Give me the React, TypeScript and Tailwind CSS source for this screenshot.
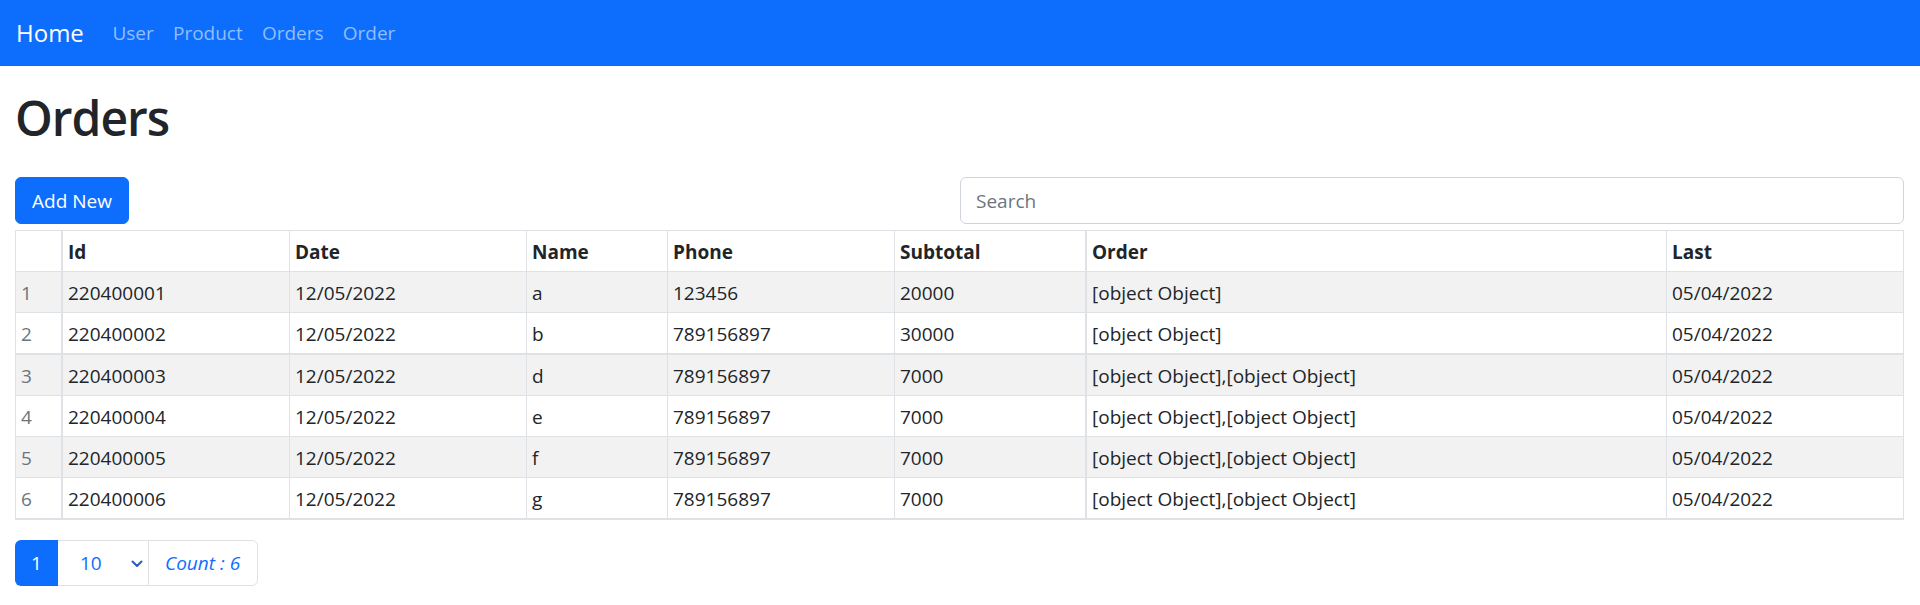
import React from "react";

const rows = [
  { n: 1, id: "220400001", date: "12/05/2022", name: "a", phone: "123456", sub: "20000", order: "[object Object]", last: "05/04/2022" },
  { n: 2, id: "220400002", date: "12/05/2022", name: "b", phone: "789156897", sub: "30000", order: "[object Object]", last: "05/04/2022" },
  { n: 3, id: "220400003", date: "12/05/2022", name: "d", phone: "789156897", sub: "7000", order: "[object Object],[object Object]", last: "05/04/2022" },
  { n: 4, id: "220400004", date: "12/05/2022", name: "e", phone: "789156897", sub: "7000", order: "[object Object],[object Object]", last: "05/04/2022" },
  { n: 5, id: "220400005", date: "12/05/2022", name: "f", phone: "789156897", sub: "7000", order: "[object Object],[object Object]", last: "05/04/2022" },
  { n: 6, id: "220400006", date: "12/05/2022", name: "g", phone: "789156897", sub: "7000", order: "[object Object],[object Object]", last: "05/04/2022" },
];

const gridCols = "grid grid-cols-[47px_227px_237px_141px_227px_192px_580px_1fr]";
const cell = "h-[40px] pl-[5px] pt-[2px] leading-[38px] whitespace-nowrap overflow-hidden";

export default function App() {
  return (
    <div className="min-h-[605px] bg-white text-[#212529]" style={{ fontFamily: '"Open Sans", "Noto Sans", sans-serif' }}>
      <nav className="flex h-[66px] items-center bg-[#0d6efd] pl-[16px]">
        <a className="mr-[19px] text-[24px] leading-[36px] text-white">Home</a>
        {["User", "Product", "Orders", "Order"].map((l) => (
          <a key={l} className="px-[9.6px] text-[19px] leading-[28.8px] text-[#92befe]">
            {l}
          </a>
        ))}
      </nav>

      <div className="pl-[15px] pr-[16px]">
        <h1 className="mt-[23px] h-[58px] text-[48px] font-semibold leading-[58px] tracking-[-1px] text-[#212529]">Orders</h1>

        <div className="mt-[30px] mb-[6px] grid grid-cols-2">
          <div>
            <button className="h-[47px] w-[114px] rounded-[6px] border border-[#0d6efd] bg-[#0d6efd] text-[19px] leading-[28px] text-white">
              Add New
            </button>
          </div>
          <div className="pl-[0.5px]">
            <input
              placeholder="Search"
              className="h-[47px] w-full rounded-[6px] border border-[#ced4da] bg-white px-[15px] text-[19px] text-[#212529] outline-none placeholder:text-[#6c757d]"
            />
          </div>
        </div>

        <div className="border-x border-t border-[#dee2e6] text-[19px]">
          <div className={`${gridCols} border-b border-[#dee2e6] font-bold`}>
            <div className={`${cell} border-r-2 border-[#dee2e6]`}></div>
            <div className={`${cell} border-r border-[#dee2e6]`}>Id</div>
            <div className={`${cell} border-r border-[#dee2e6]`}>Date</div>
            <div className={`${cell} border-r border-[#dee2e6]`}>Name</div>
            <div className={`${cell} border-r border-[#dee2e6]`}>Phone</div>
            <div className={`${cell} border-r-2 border-[#dee2e6]`}>Subtotal</div>
            <div className={`${cell} border-r border-[#dee2e6]`}>Order</div>
            <div className={cell}>Last</div>
          </div>
          {rows.map((r) => (
            <div
              key={r.n}
              className={`${gridCols} border-[#dee2e6] ${r.n === 2 || r.n === 6 ? "border-b-2" : "border-b"} ${
                r.n % 2 === 1 ? "bg-[#f2f2f2]" : "bg-white"
              }`}
            >
              <div className={`${cell} border-r-2 border-[#dee2e6] text-[#6c757d]`}>{r.n}</div>
              <div className={`${cell} border-r border-[#dee2e6]`}>{r.id}</div>
              <div className={`${cell} border-r border-[#dee2e6]`}>{r.date}</div>
              <div className={`${cell} border-r border-[#dee2e6]`}>{r.name}</div>
              <div className={`${cell} border-r border-[#dee2e6]`}>{r.phone}</div>
              <div className={`${cell} border-r-2 border-[#dee2e6]`}>{r.sub}</div>
              <div className={`${cell} border-r border-[#dee2e6]`}>{r.order}</div>
              <div className={cell}>{r.last}</div>
            </div>
          ))}
        </div>

        <div className="mt-[20px] flex h-[46px] text-[19px]">
          <div className="flex w-[43px] items-center justify-center rounded-l-[6px] bg-[#0d6efd] text-white">1</div>
          <div className="flex w-[90px] items-center border-y border-[#dee2e6] pl-[22px] pr-[5px] text-[#0d6efd]">
            <span className="flex-1">10</span>
            <svg width="12" height="9" viewBox="0 0 12 9" fill="none">
              <path d="M1.5 2.5 L6 7 L10.5 2.5" stroke="#2a5cc0" strokeWidth="2" strokeLinecap="round" strokeLinejoin="round" />
            </svg>
          </div>
          <div className="flex w-[110px] items-center rounded-r-[6px] border border-[#dee2e6] pl-[16px] italic text-[#0d6efd]">
            Count : 6
          </div>
        </div>
      </div>
    </div>
  );
}
